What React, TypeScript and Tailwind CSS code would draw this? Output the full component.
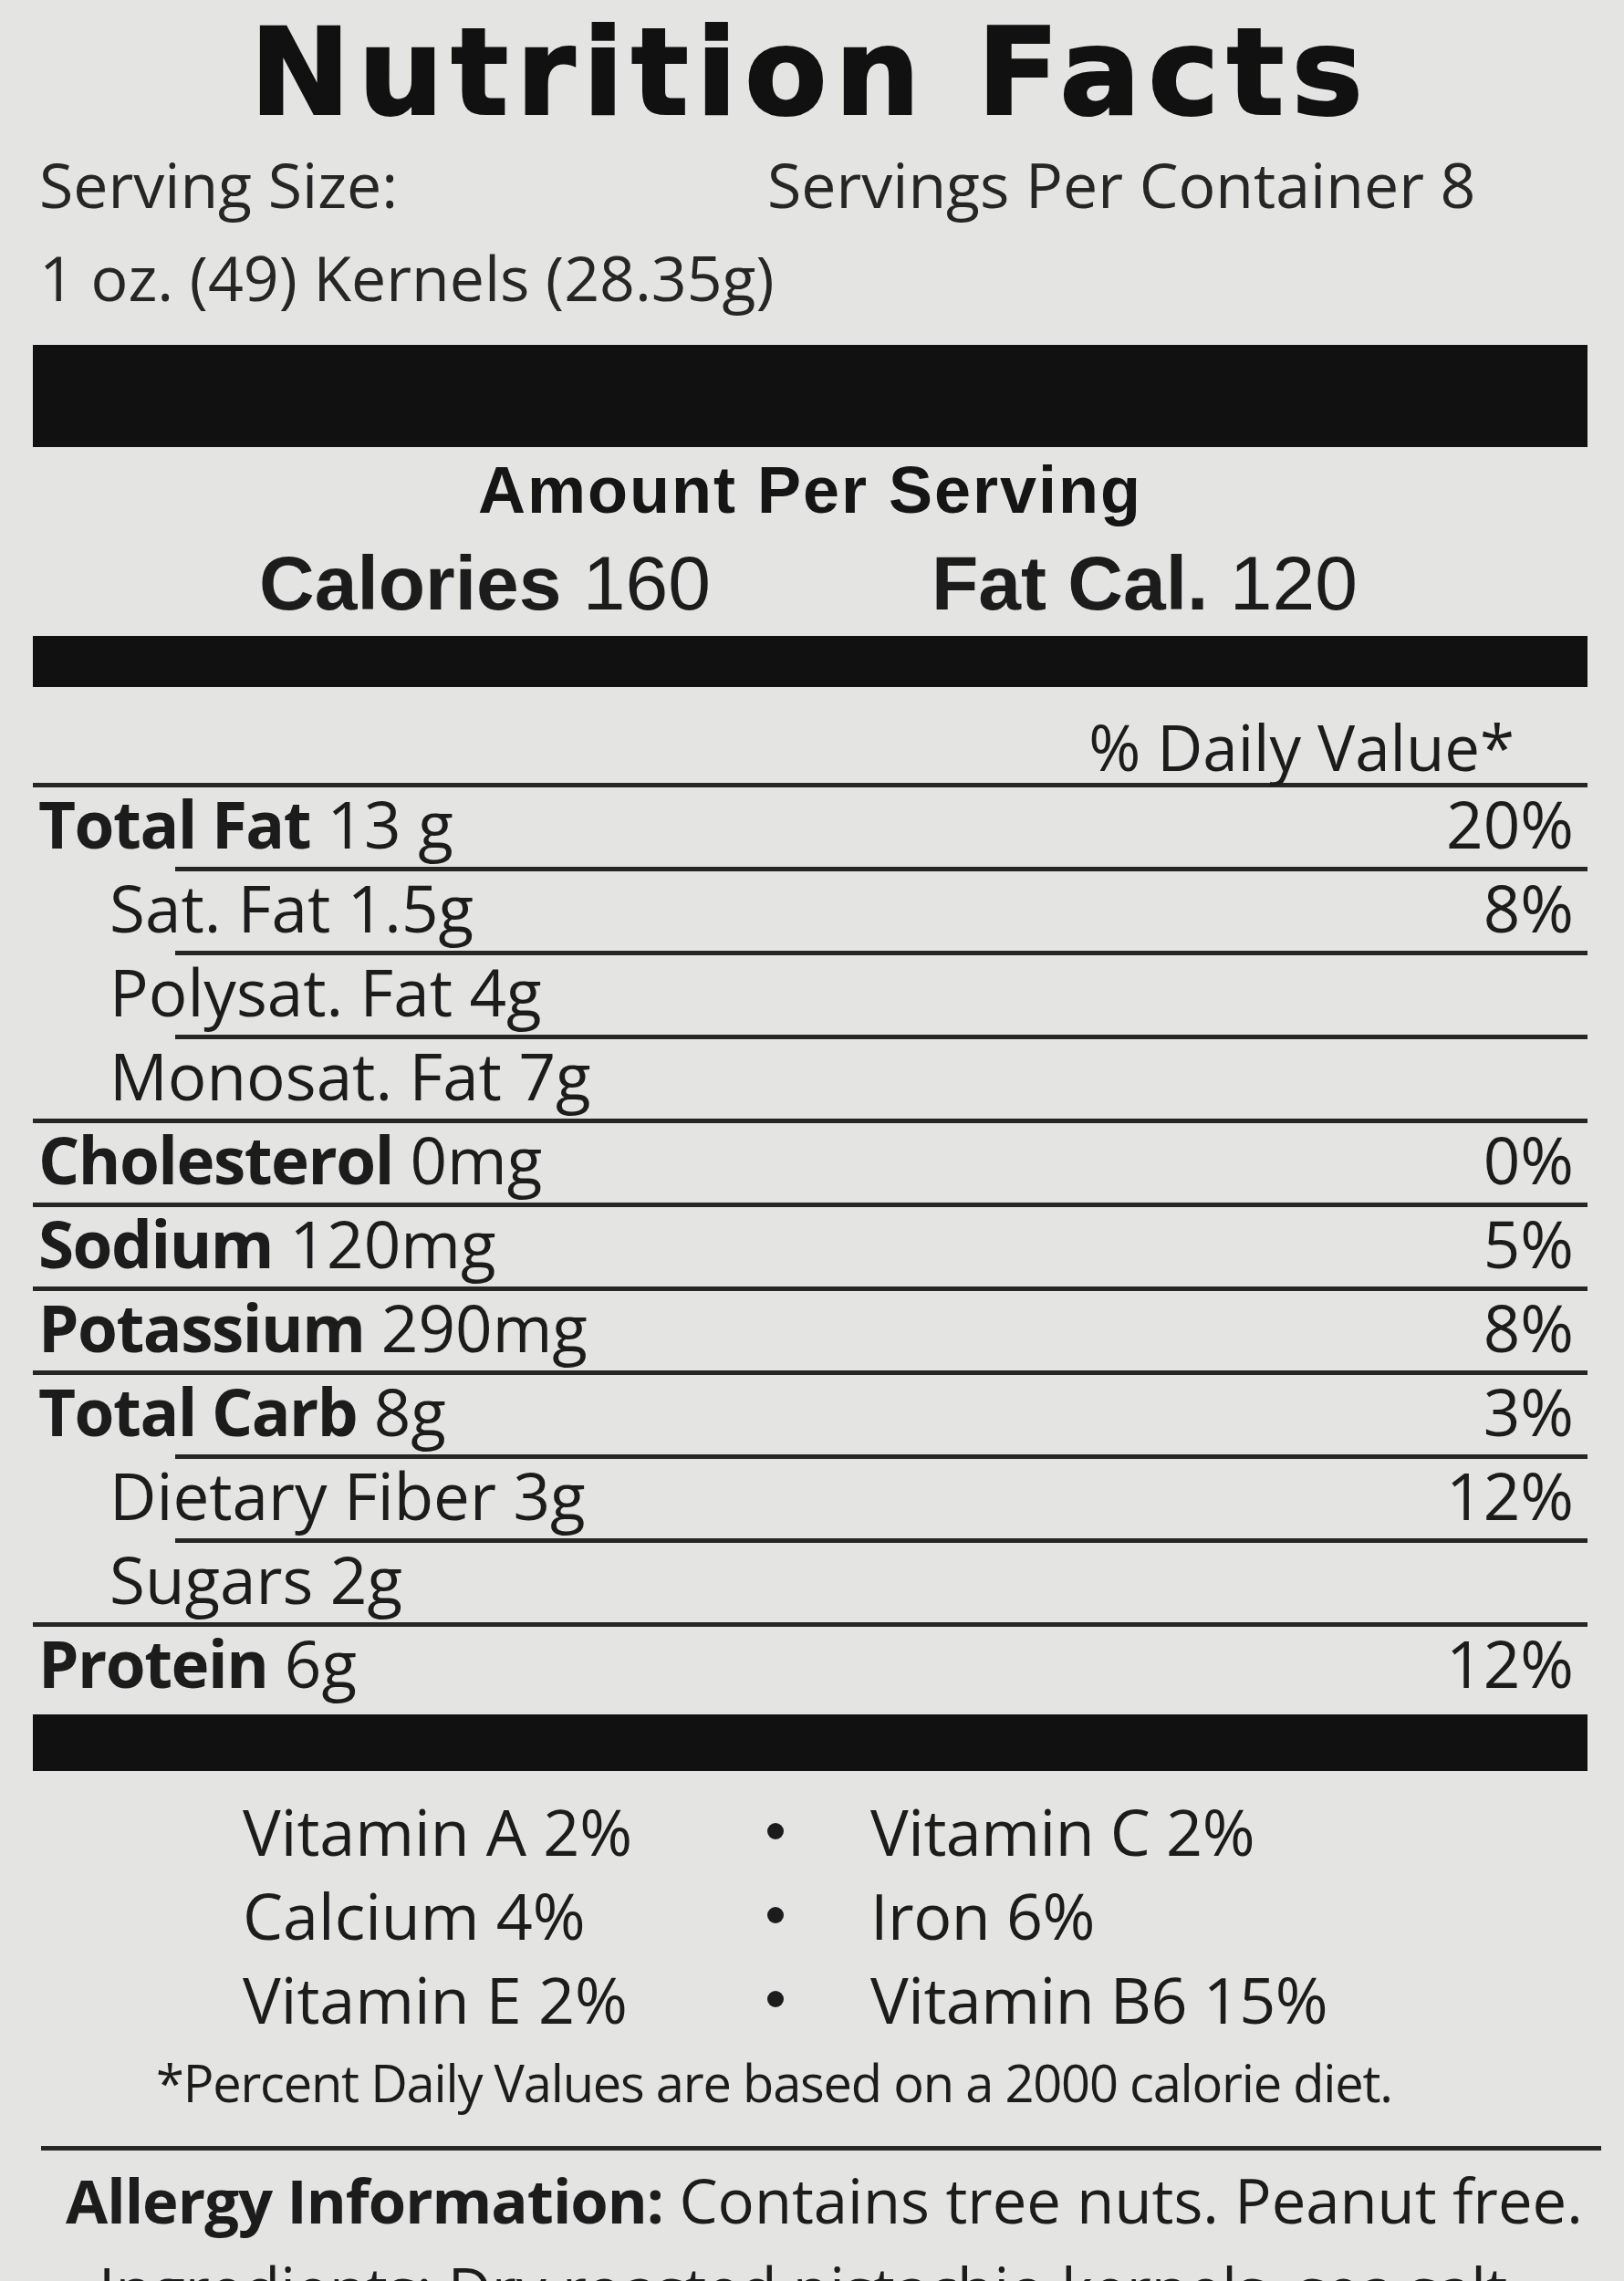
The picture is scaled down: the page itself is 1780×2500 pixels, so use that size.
import React from "react";

type Rule = "full" | "sub" | "bar";

interface Row {
    label: string;
    value: string;
    pct?: string;
    bold: boolean;
    rule: Rule;
}

const rows: Row[] = [
    { label: "Total Fat", value: "13 g", pct: "20%", bold: true, rule: "sub" },
    { label: "Sat. Fat", value: "1.5g", pct: "8%", bold: false, rule: "sub" },
    { label: "Polysat. Fat", value: "4g", bold: false, rule: "sub" },
    { label: "Monosat. Fat", value: "7g", bold: false, rule: "full" },
    { label: "Cholesterol", value: "0mg", pct: "0%", bold: true, rule: "full" },
    { label: "Sodium", value: "120mg", pct: "5%", bold: true, rule: "full" },
    { label: "Potassium", value: "290mg", pct: "8%", bold: true, rule: "full" },
    { label: "Total Carb", value: "8g", pct: "3%", bold: true, rule: "sub" },
    { label: "Dietary Fiber", value: "3g", pct: "12%", bold: false, rule: "sub" },
    { label: "Sugars", value: "2g", bold: false, rule: "full" },
    { label: "Protein", value: "6g", pct: "12%", bold: true, rule: "bar" },
];

const vitamins = [
    ["Vitamin A 2%", "Vitamin C 2%"],
    ["Calcium 4%", "Iron 6%"],
    ["Vitamin E 2%", "Vitamin B6 15%"],
];

function Divider({ rule }: { rule: Rule }) {
    if (rule === "bar") return <div className="h-[62px] bg-[#111]" />;
    if (rule === "sub") return <div className="ml-[156px] h-[5px] bg-[#262626]" />;
    return <div className="h-[5px] bg-[#262626]" />;
}

export default function App() {
    return (
        <div className="w-[1780px] h-[2500px] overflow-hidden bg-[#e4e4e2] text-[#1c1c1c]">
            <div className="ml-[36px] mr-[40px] font-['Open_Sans',sans-serif]">
                {/* title */}
                <div className="pt-[13px] h-[140px] text-center font-['DejaVu_Sans',sans-serif] font-bold text-[132px] leading-[132px] tracking-[8px] text-[#111] [-webkit-text-stroke:2px_#111]">
                    Nutrition Facts
                </div>

                {/* serving info */}
                <div className="mt-[22px] flex text-[68px] leading-[80px] text-[#262626]">
                    <span className="pl-[7px] w-[805px]">Serving Size:</span>
                    <span>Servings Per Container 8</span>
                </div>
                <div className="mt-[22px] pl-[7px] text-[68px] leading-[80px] text-[#262626]">
                    1 oz. (49) Kernels (28.35g)
                </div>

                <div className="mt-[34px] h-[112px] bg-[#111]" />

                <div className="mt-[7px] text-center font-['Liberation_Sans',sans-serif] font-bold text-[72px] leading-[80px] tracking-[2px] text-[#151515]">
                    Amount Per Serving
                </div>
                <div className="mt-[17px] flex font-['Liberation_Sans',sans-serif] text-[84px] leading-[90px]">
                    <span className="pl-[248px] w-[985px]">
                        <b>Calories</b> 160
                    </span>
                    <span>
                        <b>Fat Cal.</b> 120
                    </span>
                </div>

                <div className="mt-[13px] h-[56px] bg-[#111]" />

                <div className="mt-[26px] pr-[80px] text-right text-[69px] leading-[79px]">% Daily Value*</div>
                <div className="h-[5px] bg-[#262626]" />

                {/* nutrient rows */}
                {rows.map((r) => (
                    <div key={r.label}>
                        <div
                            className={
                                r.label === "Protein"
                                    ? "h-[96px] flex justify-between pr-[15px] text-[71px] leading-[80px] pl-[6px]"
                                    : r.bold
                                    ? "h-[87px] flex justify-between pr-[15px] text-[71px] leading-[80px] pl-[6px]"
                                    : "h-[87px] flex justify-between pr-[15px] text-[71px] leading-[80px] pl-[84px]"
                            }
                        >
                            <span>
                                {r.bold ? <b className="tracking-[-1.5px]">{r.label}</b> : r.label} {r.value}
                            </span>
                            {r.pct && <span>{r.pct}</span>}
                        </div>
                        <Divider rule={r.rule} />
                    </div>
                ))}

                {/* vitamins */}
                <div className="mt-[20px] text-[70px] leading-[92px]">
                    {vitamins.map(([a, b]) => (
                        <div key={a} className="grid grid-cols-[764px_100px_1fr]">
                            <span className="pl-[230px]">{a}</span>
                            <span className="flex items-center justify-center">
                                <span className="block w-[18px] h-[18px] rounded-full bg-[#1c1c1c]" />
                            </span>
                            <span className="pl-[54px] tracking-[-0.5px]">{b}</span>
                        </div>
                    ))}
                </div>

                <div className="mt-[10px] pl-[135px] text-[56px] leading-[70px] tracking-[-1.2px]">
                    *Percent Daily Values are based on a 2000 calorie diet.
                </div>

                <div className="mt-[35px] ml-[9px] -mr-[15px] h-[5px] bg-[#262626]" />

                <div className="mt-[14px] pl-[36px] text-[67px] leading-[80px]">
                    <b className="tracking-[-1px]">Allergy Information:</b> Contains tree nuts. Peanut free.
                </div>
                <div className="mt-[16px] pl-[72px] text-[66px] leading-[80px]">
                    Ingredients: Dry roasted pistachio kernels, sea salt.
                </div>
            </div>
        </div>
    );
}
